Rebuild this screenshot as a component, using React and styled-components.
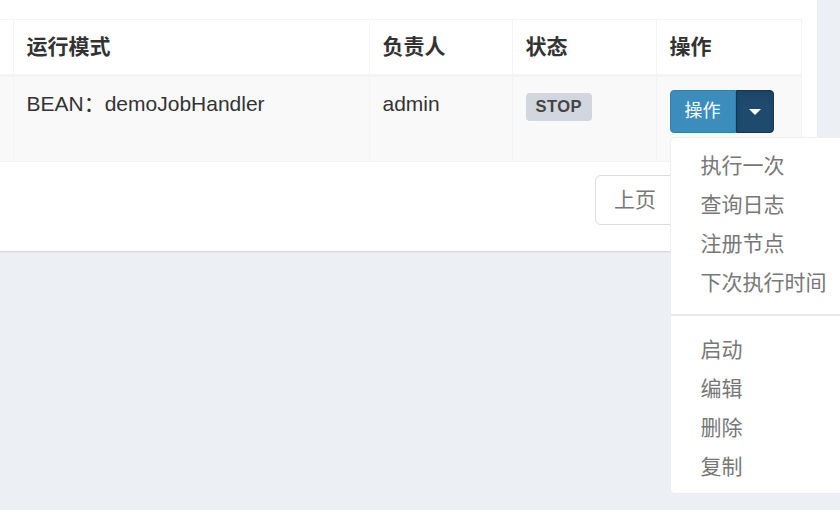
import React from "react";
import styled, { createGlobalStyle } from "styled-components";

const Global = createGlobalStyle`
  html, body { margin: 0; padding: 0; }
  body {
    background: #ecf0f5;
    overflow: hidden;
    width: 840px;
    height: 510px;
    font-family: "Liberation Sans", "Noto Sans CJK SC", sans-serif;
    color: #333;
  }
  * { box-sizing: border-box; }
`;

const Box = styled.div`
  width: 817px;
  background: #fff;
  padding: 19px 16px 26px 0;
  box-shadow: 0 1px 1px rgba(0, 0, 0, 0.1);
`;

const Table = styled.table`
  border-collapse: collapse;
  table-layout: fixed;
  width: 801px;
  font-size: 21px;
  line-height: 30px;
`;

const Th = styled.th`
  text-align: left;
  font-weight: bold;
  padding: 12px 13px;
  border: 1px solid #f4f4f4;
  border-bottom: 3px solid #f4f4f4;
  color: #333;
  &:first-child { border-left: none; padding: 0; }
`;

const BodyRow = styled.tr`
  background: #f9f9f9;
`;

const Td = styled.td`
  vertical-align: top;
  padding: 12px 13px;
  border: 1px solid #f4f4f4;
  color: #333;
  &:first-child { border-left: none; padding: 0; }
`;

const Label = styled.span`
  display: inline-block;
  margin-top: 4px;
  background: #d2d6de;
  color: #444;
  font-weight: bold;
  font-size: 16.5px;
  letter-spacing: 0.5px;
  line-height: 19px;
  padding: 4px 10px 5px;
  border-radius: 4px;
`;

const ActionWrap = styled.div`
  position: relative;
  height: 60px;
  padding-top: 1px;
`;

const BtnGroup = styled.div`
  display: flex;
`;

const Btn = styled.div`
  flex: none;
  background: ${(p) => (p.$dark ? "#1e4a6e" : "#3c8dbc")};
  border: 1px solid ${(p) => (p.$dark ? "#153754" : "#367fa9")};
  color: #fff;
  font-size: 18px;
  line-height: 27px;
  height: 43px;
  padding: 7px 0;
  white-space: nowrap;
  border-radius: ${(p) => (p.$dark ? "0 4px 4px 0" : "4px 0 0 4px")};
  width: ${(p) => (p.$dark ? "38px" : "66px")};
  display: flex;
  align-items: center;
  justify-content: center;
  box-shadow: ${(p) => (p.$dark ? "inset 0 3px 5px rgba(0,0,0,0.125)" : "none")};
`;

const Caret = styled.span`
  width: 0;
  height: 0;
  border-left: 6px solid transparent;
  border-right: 6px solid transparent;
  border-top: 6px solid #fff;
`;

const Menu = styled.ul`
  position: absolute;
  left: 0;
  top: 48px;
  z-index: 10;
  min-width: 240px;
  margin: 0;
  list-style: none;
  padding: 7px 0 8px;
  background: #fff;
  border: 1px solid #eee;
  border-radius: 5px;
  font-size: 21px;
  line-height: 30px;
  font-weight: normal;
`;

const MenuItem = styled.li`
  padding: 6px 30px 3px;
  color: #777;
  white-space: nowrap;
`;

const Divider = styled.li`
  height: 2px;
  margin: 13px 0 13px;
  background: #e8e8e8;
`;

const Pager = styled.div`
  display: flex;
  justify-content: flex-start;
  margin-top: 13px;
  padding-left: 595px;
`;

const PageLink = styled.div`
  border: 1px solid #ddd;
  padding: 9px 18px;
  width: 110px;
  font-size: 21px;
  line-height: 30px;
  color: #777;
  background: #fff;
  border-radius: 6px 0 0 6px;
`;

const menuTop = ["执行一次", "查询日志", "注册节点", "下次执行时间"];
const menuBottom = ["启动", "编辑", "删除", "复制"];

export default function App() {
  return (
    <>
      <Global />
      <Box>
        <Table>
          <colgroup>
            <col style={{ width: 13 }} />
            <col style={{ width: 356 }} />
            <col style={{ width: 143 }} />
            <col style={{ width: 144 }} />
            <col style={{ width: 145 }} />
          </colgroup>
          <thead>
            <tr>
              <Th />
              <Th>运行模式</Th>
              <Th>负责人</Th>
              <Th>状态</Th>
              <Th>操作</Th>
            </tr>
          </thead>
          <tbody>
            <BodyRow>
              <Td />
              <Td>BEAN：demoJobHandler</Td>
              <Td>admin</Td>
              <Td>
                <Label>STOP</Label>
              </Td>
              <Td>
                <ActionWrap>
                  <BtnGroup>
                    <Btn>操作</Btn>
                    <Btn $dark>
                      <Caret />
                    </Btn>
                  </BtnGroup>
                  <Menu>
                    {menuTop.map((t) => (
                      <MenuItem key={t}>{t}</MenuItem>
                    ))}
                    <Divider />
                    {menuBottom.map((t) => (
                      <MenuItem key={t}>{t}</MenuItem>
                    ))}
                  </Menu>
                </ActionWrap>
              </Td>
            </BodyRow>
          </tbody>
        </Table>
        <Pager>
          <PageLink>上页</PageLink>
        </Pager>
      </Box>
    </>
  );
}
